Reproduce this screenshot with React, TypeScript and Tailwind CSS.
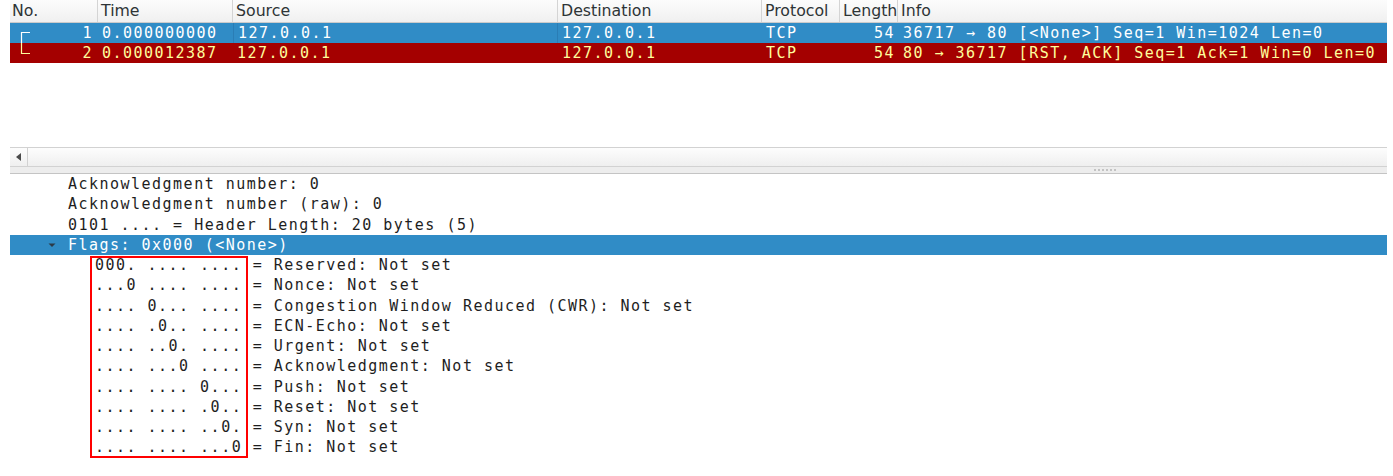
const mono = "font-['DejaVu_Sans_Mono',monospace] text-[15px] tracking-[1.48px] whitespace-pre";

type Row = {
  no: string;
  time: string;
  src: string;
  dst: string;
  proto: string;
  len: string;
  info: string;
  bg: string;
  fg: string;
  kind: "start" | "end";
  selected?: boolean;
};

function Bracket({ kind, color }: { kind: "start" | "end"; color: string }) {
  return (
    <svg width="12" height="20" viewBox="0 0 12 20" className="ml-[10px] shrink-0">
      {kind === "start" ? (
        <path d="M1.5 20 V9.5 H10" stroke={color} strokeWidth="1.2" fill="none" />
      ) : (
        <path d="M1.5 0 V10.5 H10" stroke={color} strokeWidth="1.2" fill="none" />
      )}
    </svg>
  );
}

function PacketRow({ r }: { r: Row }) {
  return (
    <div className={`flex h-[20px] leading-[20px] ${r.bg} ${mono}`} style={{ color: r.fg }}>
      <div className="flex w-[88px] shrink-0">
        <Bracket kind={r.kind} color={r.fg} />
        <div className="flex-1 text-right pr-[5px]">{r.no}</div>
      </div>
      <div className="w-[135px] shrink-0 pl-[4px] overflow-hidden">{r.time}</div>
      <div
        className={`w-[325px] shrink-0 pl-[4px] overflow-hidden ${
          r.selected ? "border-x border-[#2a7db5]" : ""
        }`}
      >
        {r.src}
      </div>
      <div className="w-[204px] shrink-0 pl-[4px] overflow-hidden">{r.dst}</div>
      <div className="w-[78px] shrink-0 pl-[4px] overflow-hidden">{r.proto}</div>
      <div className="w-[58px] shrink-0 pr-[3px] text-right overflow-hidden">{r.len}</div>
      <div className="flex-1 pl-[5px] overflow-hidden">{r.info}</div>
    </div>
  );
}

const rows: Row[] = [
  {
    no: "1",
    time: "0.000000000",
    src: "127.0.0.1",
    dst: "127.0.0.1",
    proto: "TCP",
    len: "54",
    info: "36717 → 80 [<None>] Seq=1 Win=1024 Len=0",
    bg: "bg-[#308cc6]",
    fg: "#ffffff",
    kind: "start",
    selected: true,
  },
  {
    no: "2",
    time: "0.000012387",
    src: "127.0.0.1",
    dst: "127.0.0.1",
    proto: "TCP",
    len: "54",
    info: "80 → 36717 [RST, ACK] Seq=1 Ack=1 Win=0 Len=0",
    bg: "bg-[#a40000]",
    fg: "#fffc9c",
    kind: "end",
  },
];

const level1 = [
  "Acknowledgment number: 0",
  "Acknowledgment number (raw): 0",
  "0101 .... = Header Length: 20 bytes (5)",
];

const flags = [
  "000. .... .... = Reserved: Not set",
  "...0 .... .... = Nonce: Not set",
  ".... 0... .... = Congestion Window Reduced (CWR): Not set",
  ".... .0.. .... = ECN-Echo: Not set",
  ".... ..0. .... = Urgent: Not set",
  ".... ...0 .... = Acknowledgment: Not set",
  ".... .... 0... = Push: Not set",
  ".... .... .0.. = Reset: Not set",
  ".... .... ..0. = Syn: Not set",
  ".... .... ...0 = Fin: Not set",
];

function HeaderCell({ w, label, last }: { w?: string; label: string; last?: boolean }) {
  return (
    <div
      className={`${w ?? "flex-1"} ${last ? "" : "shrink-0 border-r border-[#d4d4d4]"} pl-[3px] overflow-hidden whitespace-nowrap`}
    >
      {label}
    </div>
  );
}

export default function App() {
  return (
    <div className="w-[1393px] h-[476px] overflow-hidden bg-white pl-[10px] pr-[6px]">
      {/* Packet list header */}
      <div className="flex h-[23px] border-b border-[#cbcbcb] bg-gradient-to-b from-[#fcfcfc] to-[#f0f0f0] font-['DejaVu_Sans',sans-serif] text-[15.75px] leading-[22px] text-[#2e3436]">
        <div className="w-[88px] shrink-0 border-r border-[#d4d4d4] pl-[2px] overflow-hidden whitespace-nowrap">
          No.
        </div>
        <HeaderCell w="w-[135px]" label="Time" />
        <HeaderCell w="w-[325px]" label="Source" />
        <HeaderCell w="w-[204px]" label="Destination" />
        <HeaderCell w="w-[78px]" label="Protocol" />
        <HeaderCell w="w-[58px]" label="Length" />
        <HeaderCell label="Info" last />
      </div>

      {/* Packet rows */}
      {rows.map((r) => (
        <PacketRow key={r.no} r={r} />
      ))}

      {/* Horizontal scrollbar */}
      <div className="mt-[84px] flex h-[20px] border-y border-[#d2d2d2] bg-gradient-to-b from-[#fdfdfd] to-[#efefef]">
        <div className="flex w-[18px] items-center justify-center border-r border-[#d2d2d2]">
          <svg width="6" height="8" viewBox="0 0 6 8">
            <path d="M5 0 V8 L0 4 Z" fill="#4a4a4a" />
          </svg>
        </div>
      </div>

      {/* Splitter handle */}
      <div className="flex h-[7px] items-center gap-[2px] border-b border-[#c4c4c4] bg-[#ededed] pl-[1084px]">
        {[0, 1, 2, 3, 4, 5].map((i) => (
          <div key={i} className="h-[2px] w-[2px] rounded-full bg-[#b4b4b4]" />
        ))}
      </div>

      {/* Packet details */}
      <div className={`relative text-[#1e1e1e] ${mono}`}>
        {level1.map((t) => (
          <div key={t} className="h-[20.25px] leading-[20.25px] pl-[58px]">
            {t}
          </div>
        ))}
        <div className="flex h-[20.25px] items-center bg-[#308cc6] leading-[20.25px] text-white">
          <svg width="8" height="6" viewBox="0 0 8 6" className="ml-[38px] mr-[12px] shrink-0">
            <path d="M0.5 1.5 H7.5 L4 5 Z" fill="#2b3a47" />
          </svg>
          <span>Flags: 0x000 (&lt;None&gt;)</span>
        </div>
        {flags.map((t) => (
          <div key={t} className="h-[20.25px] leading-[20.25px] pl-[85px]">
            {t}
          </div>
        ))}
        <div className="absolute left-[80px] top-[82px] h-[202px] w-[158px] border-2 border-[#ff0000]" />
      </div>
    </div>
  );
}
